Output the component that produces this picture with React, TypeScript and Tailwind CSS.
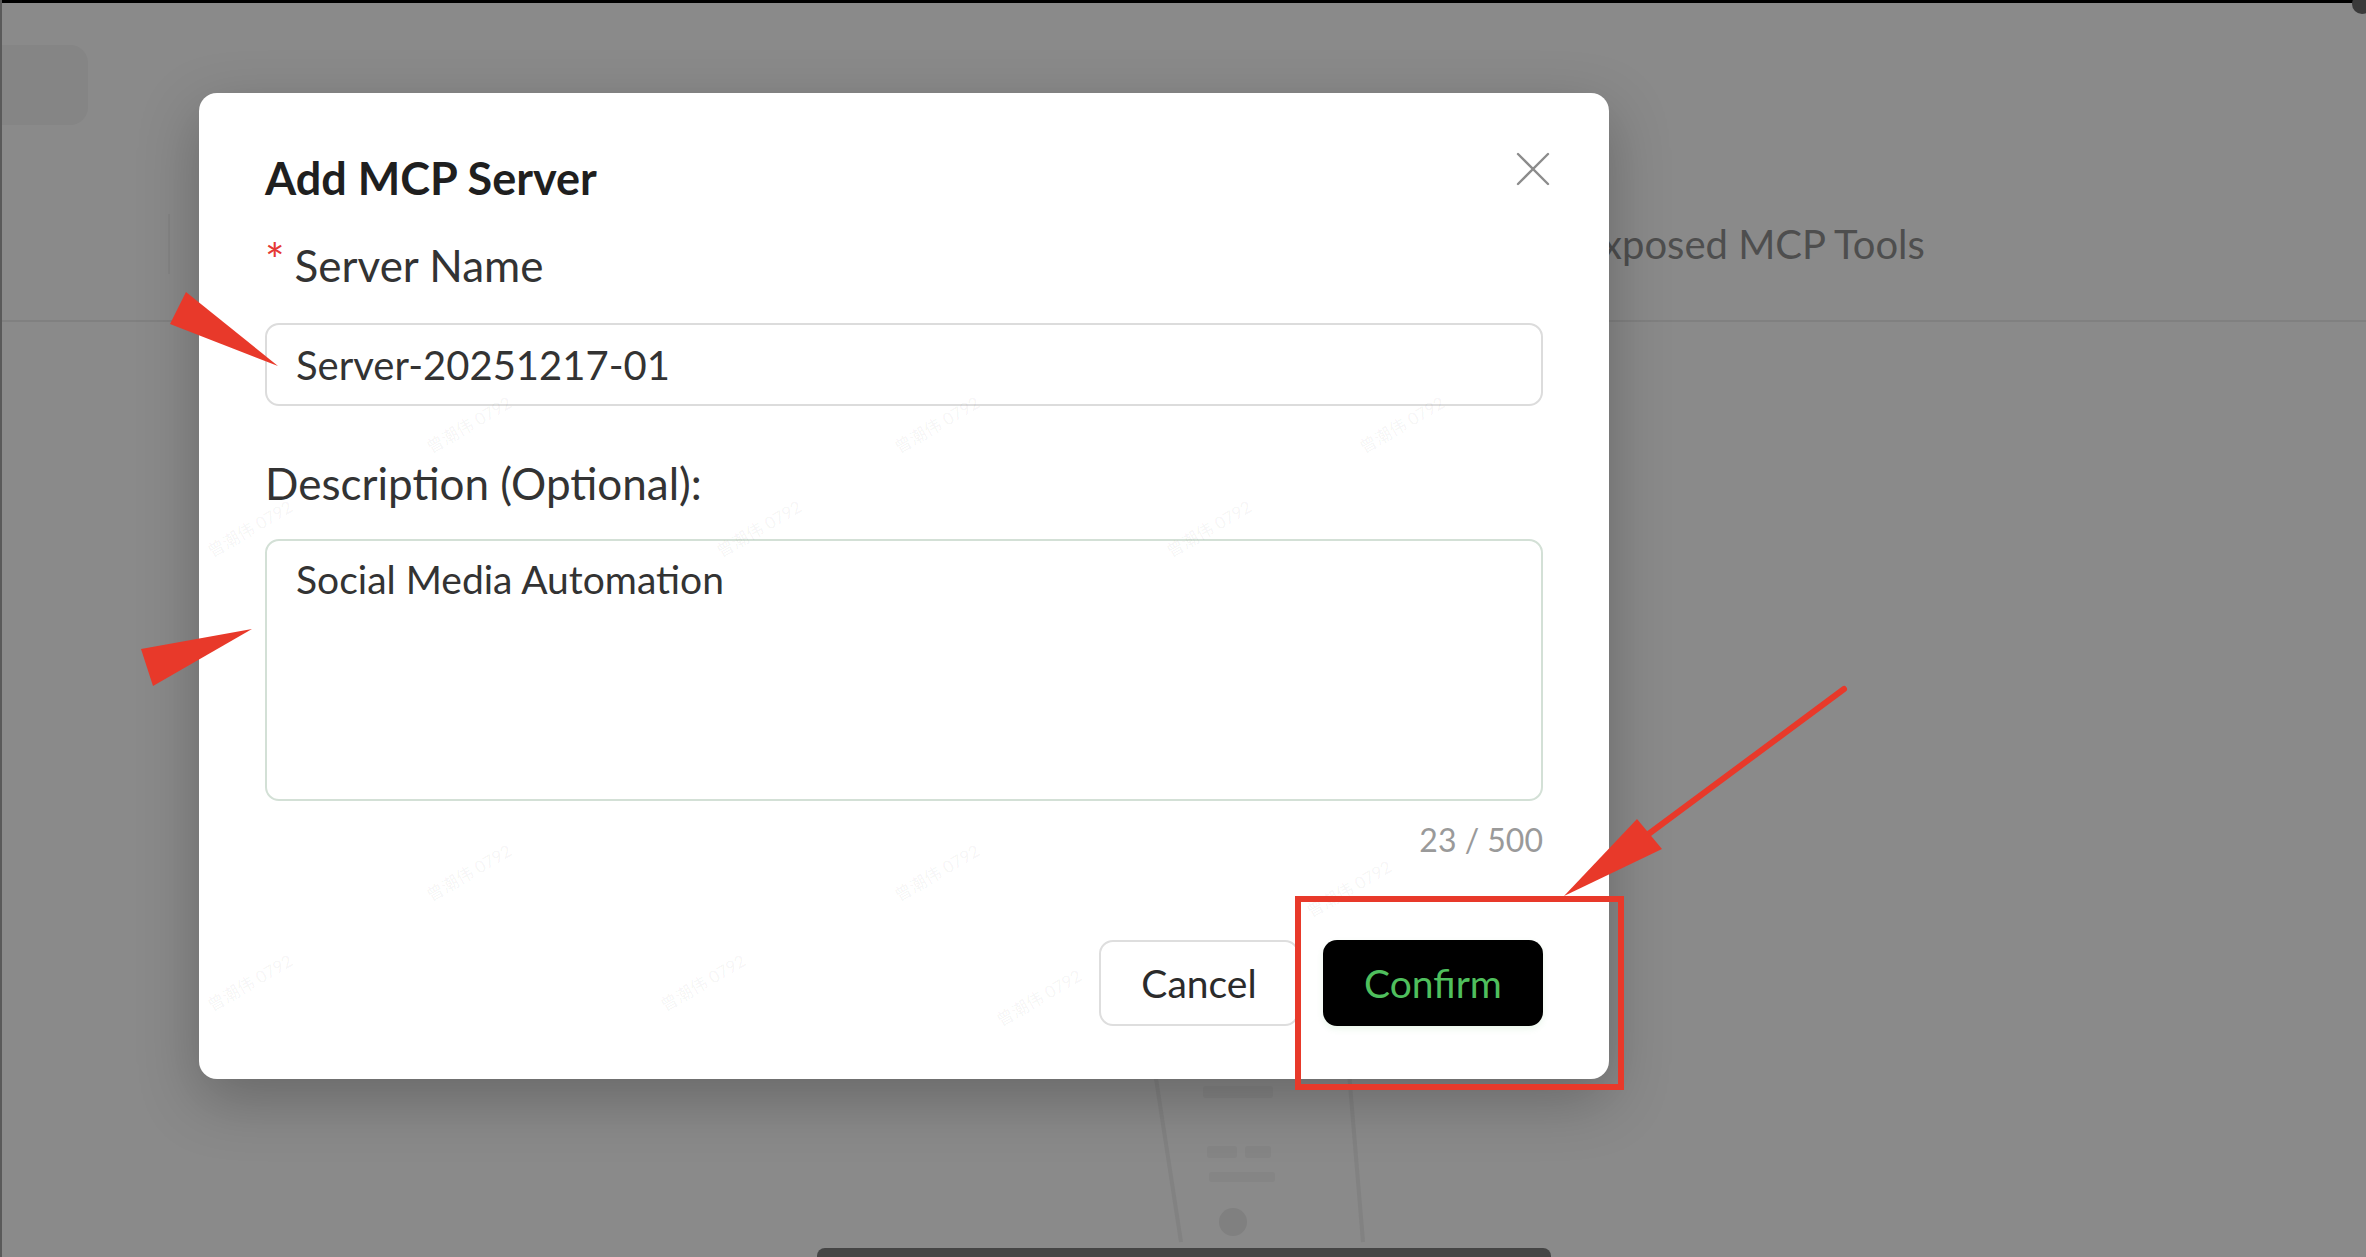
import React from "react";

const font = { fontFamily: "Lato, 'Noto Sans', 'Noto Sans CJK SC', sans-serif" };

function CloseIcon() {
  return (
    <svg viewBox="0 0 36 36" className="w-[36px] h-[36px]" fill="none" stroke="#8c8c8c" strokeWidth="2.4" strokeLinecap="round">
      <path d="M3 3 L33 33 M33 3 L3 33" />
    </svg>
  );
}

// faint watermark marks laid over the dialog (centre points)
const marks = [
  [270, 332], [738, 332], [1203, 332],
  [51, 436], [560, 436], [1010, 436],
  [270, 780], [738, 780], [1150, 796],
  [51, 890], [504, 890], [840, 905],
];

function Dialog() {
  return (
    <div className="absolute left-[199px] top-[93px] w-[1410px] h-[986px] bg-white rounded-[18px] shadow-[0_20px_60px_rgba(0,0,0,0.25)] overflow-hidden">
      {marks.map(([x, y], i) => (
        <span
          key={i}
          className="absolute w-[110px] text-center text-[17px] leading-[20px] text-black/[0.05] -rotate-[30deg] whitespace-nowrap pointer-events-none"
          style={{ left: x - 55, top: y - 10 }}
        >
          曾潮伟 0792
        </span>
      ))}
      <button className="absolute top-[58px] right-[58px]">
        <CloseIcon />
      </button>
      <div className="flex flex-col px-[66px] pt-[57px] pb-[53px]">
        <h2 className="text-[45px] leading-[56px] font-bold text-[#1f1f1f]">Add MCP Server</h2>

        <label className="mt-[31px] flex items-center text-[44px] leading-[56px] text-[#333]">
          <span className="text-[#e53935] text-[46px] leading-none -mt-[10px] mr-[10px]">*</span>
          Server Name
        </label>
        <div className="mt-[30px] h-[83px] border-2 border-[#dcdcdc] rounded-[14px] flex items-center pl-[29px] text-[40px] text-[#333]">
          Server-20251217-01
        </div>

        <label className="mt-[49px] text-[44px] leading-[56px] text-[#333]">Description (Optional):</label>
        <div className="mt-[28px] h-[262px] border-2 border-[#d3e0d6] rounded-[14px] pl-[29px] pt-[10px] text-[39px] leading-[56px] text-[#333]">
          Social Media Automation
        </div>
        <div className="mt-[17px] text-right text-[32px] leading-[44px] text-[#9a9a9a]">23 / 500</div>

        <div className="mt-[78px] flex justify-end gap-[24px]">
          <button className="w-[200px] h-[86px] border-2 border-[#dedede] rounded-[14px] text-[39px] text-[#2b2b2b] bg-white">
            Cancel
          </button>
          <button className="w-[220px] h-[86px] rounded-[14px] bg-black text-[39px] text-[#4fbf5d] shadow-[0_3px_6px_rgba(80,190,90,0.12)]">
            Confirm
          </button>
        </div>
      </div>
    </div>
  );
}

function Annotations() {
  return (
    <svg className="absolute inset-0 pointer-events-none" width="2366" height="1257" viewBox="0 0 2366 1257">
      <polygon points="186,292 170,324 278,366" fill="#e8392a" />
      <polygon points="141,649 153,686 252,629" fill="#e8392a" />
      <line x1="1844" y1="689" x2="1600" y2="870" stroke="#e8392a" strokeWidth="6" strokeLinecap="round" />
      <polygon points="1564,896 1637,819 1662,849" fill="#e8392a" />
      <rect x="1298" y="899" width="323" height="188" fill="none" stroke="#e8392a" strokeWidth="6" />
    </svg>
  );
}

// faint illustration peeking out under the dialog
function Ladder() {
  return (
    <svg width="240" height="176" viewBox="0 0 240 176" fill="none" stroke="#828282" strokeWidth="4">
      <path d="M14 0 L40 170" />
      <path d="M208 0 L222 170" />
      <rect x="62" y="14" width="70" height="12" rx="3" fill="#858585" stroke="none" />
      <rect x="66" y="74" width="30" height="12" rx="3" fill="#858585" stroke="none" />
      <rect x="104" y="74" width="26" height="12" rx="3" fill="#858585" stroke="none" />
      <rect x="68" y="100" width="66" height="10" rx="3" fill="#858585" stroke="none" />
      <circle cx="92" cy="150" r="14" fill="#808080" stroke="none" />
    </svg>
  );
}

export default function App() {
  return (
    <div className="relative w-full h-[1257px] overflow-hidden bg-[#8a8a8a]" style={font}>
      {/* dimmed page underneath */}
      <div className="flex flex-col h-full border-l-2 border-[#5a5a5a]">
        <div className="h-[3px] bg-black" />
        <div className="pt-[42px] h-[165px]">
          <div className="w-[86px] h-[80px] rounded-r-[18px] bg-[#858585]" />
        </div>
        <div className="h-[154px] border-b-2 border-[#808080] flex items-center">
          <div className="ml-[166px] w-[2px] h-[60px] bg-[#848484]" />
          <span className="ml-[1409px] -mt-[1px] text-[40px] text-[#4e4e4e]">Exposed MCP Tools</span>
        </div>
        <div className="flex-1 flex flex-col justify-end items-center">
          <div className="ml-[154px]">
            <Ladder />
          </div>
          <div className="w-[734px] h-[9px] bg-[#454545] rounded-t-[8px]" />
        </div>
      </div>
      <div className="absolute top-[-6px] right-[-6px] w-[20px] h-[20px] rounded-full bg-[#3a3a3a]" />

      <Dialog />
      <Annotations />
    </div>
  );
}
